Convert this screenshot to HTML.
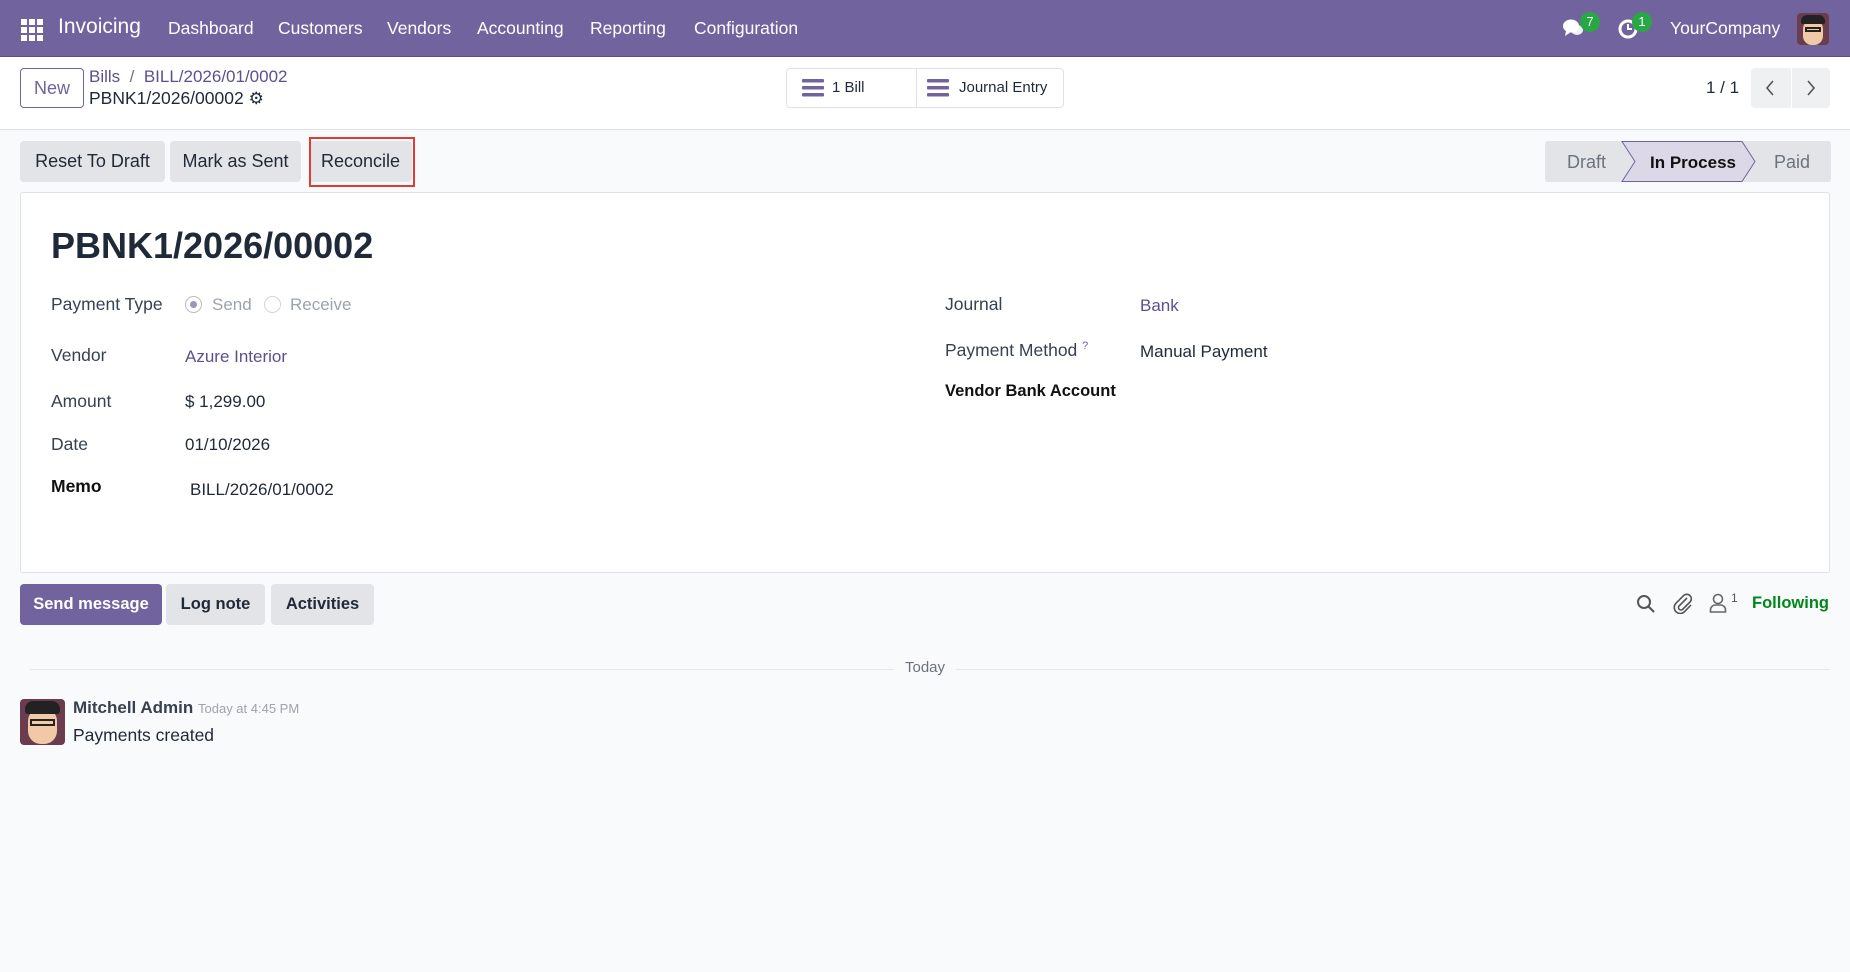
<!DOCTYPE html>
<html><head><meta charset="utf-8"><style>
*{box-sizing:border-box;margin:0;padding:0}
body{width:1850px;height:972px;background:#f9fafb;font-family:"Liberation Sans","DejaVu Sans",sans-serif;color:#374151;position:relative;overflow:hidden;font-size:17px}
.a{position:absolute;white-space:nowrap}
.nav{position:absolute;left:0;top:0;width:1850px;height:57px;background:#71639e;border-bottom:1px solid #5b4f85}
.nav .a{color:#fff;top:18px;font-size:17.5px}
.cp{position:absolute;left:0;top:57px;width:1850px;height:73px;background:#fff;border-bottom:1px solid #dee2e6}
.btn{position:absolute;background:#e2e4e8;border-radius:4px;height:41px;line-height:41px;text-align:center;font-size:18px;color:#1f2937}
.lbl{position:absolute;font-size:17.5px;color:#374151}
.val{position:absolute;font-size:17px;color:#1f2937}
.link{color:#5e4f8f}
</style></head><body>
<div class="nav">
 <svg class="a" style="left:21px;top:19px" width="22" height="22" viewBox="0 0 22 22" fill="#fff"><rect x="0" y="0" width="6" height="6"/><rect x="8" y="0" width="6" height="6"/><rect x="16" y="0" width="6" height="6"/><rect x="0" y="8" width="6" height="6"/><rect x="8" y="8" width="6" height="6"/><rect x="16" y="8" width="6" height="6"/><rect x="0" y="16" width="6" height="6"/><rect x="8" y="16" width="6" height="6"/><rect x="16" y="16" width="6" height="6"/></svg>
 <div class="a" style="left:58px;top:15px;font-size:21px">Invoicing</div>
 <div class="a" style="left:168px">Dashboard</div>
 <div class="a" style="left:278px">Customers</div>
 <div class="a" style="left:387px">Vendors</div>
 <div class="a" style="left:477px">Accounting</div>
 <div class="a" style="left:590px">Reporting</div>
 <div class="a" style="left:694px">Configuration</div>
 <svg class="a" style="left:1562px;top:17px" width="24" height="22" viewBox="0 0 24 22" fill="#fff"><ellipse cx="9" cy="9" rx="8" ry="6.5"/><path d="M4 14 L3 19 L9 15Z"/><ellipse cx="15" cy="13" rx="6" ry="5" opacity=".9"/></svg>
 <div class="a" style="left:1580px;top:12px;width:20px;height:20px;border-radius:10px;background:#28a745;font-size:13px;text-align:center;line-height:20px">7</div>
 <svg class="a" style="left:1617px;top:18px" width="22" height="22" viewBox="0 0 22 22"><circle cx="11" cy="11" r="8" fill="none" stroke="#fff" stroke-width="3"/><path d="M11 6v5h4" stroke="#fff" stroke-width="2" fill="none"/></svg>
 <div class="a" style="left:1632px;top:12px;width:20px;height:20px;border-radius:10px;background:#28a745;font-size:13px;text-align:center;line-height:20px">1</div>
 <div class="a" style="left:1670px">YourCompany</div>
 <div class="a" style="left:1797px;top:13px;width:32px;height:32px;border-radius:4px;background:#6b3c4e;overflow:hidden"><div style="position:absolute;left:6px;top:7px;width:20px;height:25px;border-radius:9px;background:#f2c9a6"></div><div style="position:absolute;left:4px;top:2px;width:24px;height:9px;border-radius:6px 6px 2px 2px;background:#222"></div><div style="position:absolute;left:8px;top:14px;width:16px;height:5px;border:2px solid #222"></div></div>
</div>
<div class="cp">
 <div class="a" style="left:20px;top:11px;width:64px;height:40px;border:1px solid #71639e;border-radius:4px;color:#71639e;font-size:18px;text-align:center;line-height:38px">New</div>
 <div class="a" style="left:89px;top:10px;font-size:17px"><span class="link">Bills</span> <span style="color:#6b7280">&nbsp;/&nbsp;</span> <span class="link">BILL/2026/01/0002</span></div>
 <div class="a" style="left:89px;top:31px;font-size:17.5px;color:#1f2937">PBNK1/2026/00002 <span style="font-size:17px">⚙</span></div>
 <div class="a" style="left:786px;top:11px;width:278px;height:40px;border:1px solid #dee2e6;border-radius:4px;background:#fff"></div>
 <div class="a" style="left:916px;top:11px;width:1px;height:40px;background:#dee2e6"></div>
 <svg class="a" style="left:802px;top:22px" width="22" height="18" viewBox="0 0 22 18" fill="#71639e"><rect y="0" width="22" height="3.5" rx="1"/><rect y="7" width="22" height="3.5" rx="1"/><rect y="14" width="22" height="3.5" rx="1"/></svg>
 <div class="a" style="left:832px;top:22px;font-size:15px;color:#1f2937">1 Bill</div>
 <svg class="a" style="left:927px;top:22px" width="22" height="18" viewBox="0 0 22 18" fill="#71639e"><rect y="0" width="22" height="3.5" rx="1"/><rect y="7" width="22" height="3.5" rx="1"/><rect y="14" width="22" height="3.5" rx="1"/></svg>
 <div class="a" style="left:959px;top:22px;font-size:15px;color:#1f2937">Journal Entry</div>
 <div class="a" style="left:1706px;top:21px;font-size:17px;color:#1f2937">1 / 1</div>
 <div class="a" style="left:1751px;top:11px;width:40px;height:40px;background:#eef0f2;border-radius:4px 0 0 4px"></div>
 <div class="a" style="left:1792px;top:11px;width:38px;height:40px;background:#eef0f2;border-radius:0 4px 4px 0"></div>
 <svg class="a" style="left:1763px;top:22px" width="14" height="18" viewBox="0 0 14 18"><path d="M10 2L4 9l6 7" stroke="#555" stroke-width="1.6" fill="none"/></svg>
 <svg class="a" style="left:1804px;top:22px" width="14" height="18" viewBox="0 0 14 18"><path d="M4 2l6 7-6 7" stroke="#555" stroke-width="1.6" fill="none"/></svg>
</div>
<div class="btn" style="left:20px;top:141px;width:145px">Reset To Draft</div>
<div class="btn" style="left:170px;top:141px;width:131px">Mark as Sent</div>
<div class="btn" style="left:309px;top:141px;width:103px">Reconcile</div>
<div class="a" style="left:309px;top:137px;width:106px;height:50px;border:2px solid #e53935"></div>
<svg class="a" style="left:1545px;top:141px" width="286" height="41" viewBox="0 0 286 41">
 <rect x="0" y="0" width="286" height="41" rx="3" fill="#e2e4e8"/>
 <path d="M77 0.5 H197 L210 20.5 L197 40.5 H77 L90 20.5Z" fill="#dcd8e8" stroke="#71639e" stroke-width="1"/>
 <text x="22" y="27" font-family="Liberation Sans" font-size="18" fill="#6b7280">Draft</text>
 <text x="105" y="27" font-family="Liberation Sans" font-size="17" fill="#111" font-weight="bold">In Process</text>
 <text x="229" y="27" font-family="Liberation Sans" font-size="18" fill="#6b7280">Paid</text>
</svg>
<div class="a" style="left:20px;top:192px;width:1810px;height:381px;background:#fff;border:1px solid #dee2e6;border-radius:3px"></div>
<div class="a" style="left:51px;top:225px;font-size:36px;font-weight:bold;color:#1f2937">PBNK1/2026/00002</div>
<div class="lbl" style="left:51px;top:294px">Payment Type</div>
<div class="a" style="left:185px;top:296px;width:17px;height:17px;border-radius:9px;border:1px solid #bbb;background:#fff"><div style="position:absolute;left:4px;top:4px;width:7px;height:7px;border-radius:4px;background:#9d94c0"></div></div>
<div class="a" style="left:212px;top:295px;color:#9ca3af">Send</div>
<div class="a" style="left:264px;top:296px;width:17px;height:17px;border-radius:9px;border:1px solid #d1d5db"></div>
<div class="a" style="left:290px;top:295px;color:#9ca3af">Receive</div>
<div class="lbl" style="left:51px;top:345px">Vendor</div>
<div class="val link" style="left:185px;top:347px">Azure Interior</div>
<div class="lbl" style="left:51px;top:391px">Amount</div>
<div class="val" style="left:185px;top:392px">$ 1,299.00</div>
<div class="lbl" style="left:51px;top:434px">Date</div>
<div class="val" style="left:185px;top:435px">01/10/2026</div>
<div class="lbl" style="left:51px;top:476px;font-weight:bold;color:#111">Memo</div>
<div class="val" style="left:190px;top:480px">BILL/2026/01/0002</div>
<div class="lbl" style="left:945px;top:294px">Journal</div>
<div class="val link" style="left:1140px;top:296px">Bank</div>
<div class="lbl" style="left:945px;top:340px">Payment Method <sup style="font-size:11px;color:#71639e">?</sup></div>
<div class="val" style="left:1140px;top:342px">Manual Payment</div>
<div class="lbl" style="left:945px;top:382px;font-weight:bold;color:#111;font-size:16.5px">Vendor Bank Account</div>
<div class="btn" style="left:20px;top:584px;width:142px;background:#71639e;color:#fff;font-weight:bold;font-size:16.5px">Send message</div>
<div class="btn" style="left:166px;top:584px;width:99px;font-weight:bold;font-size:16.5px">Log note</div>
<div class="btn" style="left:271px;top:584px;width:103px;font-weight:bold;font-size:16.5px">Activities</div>
<svg class="a" style="left:1636px;top:594px" width="20" height="20" viewBox="0 0 20 20"><circle cx="8" cy="8" r="6" fill="none" stroke="#555" stroke-width="2"/><path d="M12.5 12.5L18 18" stroke="#555" stroke-width="2.2"/></svg>
<svg class="a" style="left:1673px;top:592px" width="20" height="22" viewBox="0 0 20 22"><path d="M14 6L6 14a2.5 2.5 0 0 0 3.5 3.5L17 10a4.5 4.5 0 0 0-6.4-6.4L3 11.2a6 6 0 0 0 8.5 8.5L18 13" fill="none" stroke="#555" stroke-width="1.6"/></svg>
<svg class="a" style="left:1709px;top:593px" width="18" height="20" viewBox="0 0 18 20"><circle cx="9" cy="6" r="4.5" fill="none" stroke="#666" stroke-width="1.6"/><path d="M1.5 19v-2a5 5 0 0 1 5-5h5a5 5 0 0 1 5 5v2z" fill="none" stroke="#666" stroke-width="1.6"/></svg>
<div class="a" style="left:1731px;top:591px;font-size:12px;color:#555">1</div>
<div class="a" style="left:1752px;top:594px;font-size:16.5px;font-weight:bold;color:#008818">Following</div>
<div class="a" style="left:30px;top:669px;width:1800px;height:1px;background:#e5e7eb"></div>
<div class="a" style="left:894px;top:659px;width:62px;height:20px;background:#f9fafb;text-align:center;font-size:15px;color:#6b7280">Today</div>
<div class="a" style="left:20px;top:699px;width:45px;height:46px;border-radius:4px;background:#6b3c4e;overflow:hidden"><div style="position:absolute;left:8px;top:9px;width:29px;height:36px;border-radius:13px;background:#f2c9a6"></div><div style="position:absolute;left:5px;top:2px;width:35px;height:13px;border-radius:8px 8px 3px 3px;background:#222"></div><div style="position:absolute;left:10px;top:20px;width:25px;height:7px;border:2px solid #222"></div></div>
<div class="a" style="left:73px;top:698px;font-size:17px;font-weight:bold;color:#374151">Mitchell Admin <span style="font-weight:normal;font-size:13px;color:#9ca3af">Today at 4:45 PM</span></div>
<div class="a" style="left:73px;top:725px;font-size:17.5px;color:#1f2937">Payments created</div>
</body></html>
